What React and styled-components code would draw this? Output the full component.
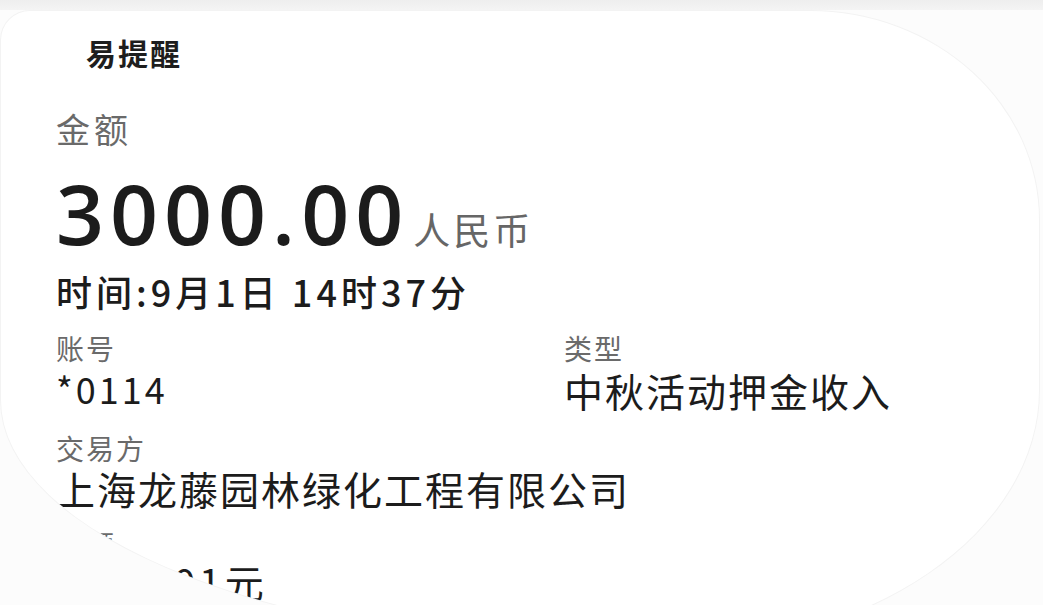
import styled, { createGlobalStyle } from "styled-components";

const GlobalStyle = createGlobalStyle`
  html, body {
    margin: 0;
    padding: 0;
    background: #fcfcfc;
    overflow: hidden;
  }
  body {
    font-family: "Noto Sans CJK SC", "Noto Sans", sans-serif;
  }
`;

const Page = styled.div`
  width: 1043px;
  height: 605px;
  padding-top: 10px;
  box-sizing: border-box;
  overflow: hidden;
  background: linear-gradient(to bottom, #eeeeee 0, #f4f4f4 10px, #fcfcfc 10px);
`;

const Card = styled.div`
  width: 1040px;
  height: 640px;
  background: #ffffff;
  border: 1px solid #f3f3f3;
  box-sizing: border-box;
  border-radius: 30px 230px 380px 640px / 30px 210px 260px 250px;
  overflow: hidden;
  padding: 22px 0 0 55px;
  display: flex;
  flex-direction: column;
`;

const Title = styled.div`
  font-size: 30px;
  font-weight: 700;
  color: #1e1e1e;
  line-height: 38px;
  letter-spacing: 2px;
  padding-left: 30px;
`;

const Label = styled.div`
  font-size: ${(p) => p.size || 28}px;
  letter-spacing: ${(p) => p.spacing || 2}px;
  color: #6a6a6a;
  line-height: 1.2;
  margin-top: ${(p) => p.gap || 0}px;
`;

const Value = styled.div`
  font-size: ${(p) => p.size || 38}px;
  letter-spacing: ${(p) => p.spacing || 2}px;
  color: #1c1c1c;
  line-height: 1.15;
  margin-top: ${(p) => p.gap || 0}px;
  white-space: nowrap;
`;

const AmountRow = styled.div`
  display: flex;
  align-items: baseline;
  gap: 4px;
  margin-top: 21px;
  line-height: 1;
`;

const Amount = styled.span`
  font-family: "Open Sans", "Noto Sans", sans-serif;
  font-size: 84px;
  font-weight: 600;
  color: #1c1c1c;
  letter-spacing: 6px;
`;

const Currency = styled.span`
  font-size: 37px;
  letter-spacing: 3px;
  color: #666;
`;

const Time = styled.div`
  font-size: 36px;
  font-weight: 500;
  letter-spacing: 4px;
  color: #1c1c1c;
  margin-top: 15px;
  line-height: 1.2;
`;

const Grid = styled.div`
  display: grid;
  grid-template-columns: 508px 1fr;
  margin-top: 19px;
`;

const Field = styled.div`
  display: flex;
  flex-direction: column;
`;

export default function App() {
  return (
    <>
      <GlobalStyle />
      <Page>
        <Card>
          <Title>易提醒</Title>
          <Label size={34} spacing={4} gap={38}>金额</Label>
          <AmountRow>
            <Amount>3000.00</Amount>
            <Currency>人民币</Currency>
          </AmountRow>
          <Time>时间:9月1日 14时37分</Time>
          <Grid>
            <Field>
              <Label>账号</Label>
              <Value size={36} spacing={3} gap={2}>*0114</Value>
            </Field>
            <Field>
              <Label>类型</Label>
              <Value size={39} spacing={2} gap={2}>中秋活动押金收入</Value>
            </Field>
          </Grid>
          <Label gap={20}>交易方</Label>
          <Value size={39} spacing={2}>上海龙藤园林绿化工程有限公司</Value>
          <Label gap={17}>余额</Label>
          <Value size={39} spacing={4} gap={-2}>3000.01元</Value>
        </Card>
      </Page>
    </>
  );
}
